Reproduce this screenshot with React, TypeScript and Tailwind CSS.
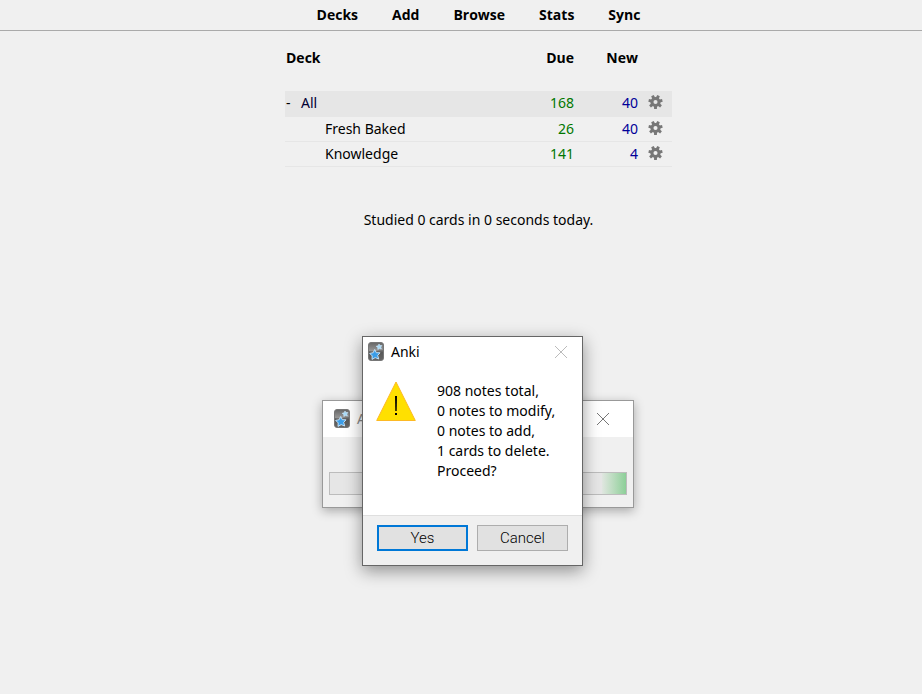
import React from "react";

const navItems = ["Decks", "Add", "Browse", "Stats", "Sync"];

const decks = [
  { name: "All", due: 168, fresh: 40, parent: true },
  { name: "Fresh Baked", due: 26, fresh: 40, parent: false },
  { name: "Knowledge", due: 141, fresh: 4, parent: false },
];

const summary = [
  "908 notes total,",
  "0 notes to modify,",
  "0 notes to add,",
  "1 cards to delete.",
  "Proceed?",
];

const teeth = [0, 1, 2, 3, 4, 5, 6];

function Gear() {
  return (
    <svg viewBox="-8 -8 16 16" className="block h-4 w-[15px]" aria-hidden="true">
      {teeth.map((i) => (
        <path
          key={i}
          d="M-1.7 3.5L-1.5 7.5H1.5L1.7 3.5Z"
          fill="#777"
          transform={`rotate(${(i * 360) / 7})`}
        />
      ))}
      <circle r="3.8" fill="none" stroke="#777" strokeWidth="3.2" />
    </svg>
  );
}

function AnkiLogo() {
  return (
    <svg viewBox="0 0 16 20" className="block h-5 w-4 shrink-0" aria-hidden="true">
      <defs>
        <linearGradient id="plate" x1="0" y1="0" x2="0" y2="1">
          <stop offset="0" stopColor="#666" />
          <stop offset="0.45" stopColor="#969696" />
          <stop offset="0.55" stopColor="#666" />
          <stop offset="1" stopColor="#808080" />
        </linearGradient>
      </defs>
      <rect x="0.5" y="0.5" width="15" height="18" rx="2.5" fill="url(#plate)" stroke="#777" />
      <path d="M1 9C5 11 10 8 15 8V16Q15 18 13 18H3Q1 18 1 16Z" fill="#4b4b4b" opacity="0.5" />
      <path
        d="M6.7 7.5L8.3 10.7L12 10.8L9.7 13.4L10.7 17L7.2 15.6L4 17.4L4.2 13.9L1.7 11.4L5.2 10.7Z"
        fill="#3b9de8"
        stroke="#cfeaff"
        strokeWidth="0.9"
        strokeLinejoin="round"
      />
      <path
        d="M11 2L11.9 3.6L13.9 3.5L12.8 5.1L13.4 7L11.4 6.4L9.8 7.5L9.8 5.5L8.2 4.3L10.2 3.8Z"
        fill="#a9dcf8"
        stroke="#cfeaff"
        strokeWidth="0.6"
        strokeLinejoin="round"
      />
    </svg>
  );
}

function CloseButton({ tone }: { tone: string }) {
  return (
    <button type="button" aria-label="Close" className={`ml-auto ${tone}`}>
      <svg viewBox="0 0 12 12" className="block size-3" fill="none" stroke="currentColor" aria-hidden="true">
        <path d="M0 0L12 12M12 0L0 12" />
      </svg>
    </button>
  );
}

function WarningSign() {
  return (
    <svg viewBox="0 0 40 40" className="block size-10 shrink-0" role="img" aria-label="Warning">
      <path d="M20 1L39.3 39.5H0.7Z" fill="#ffe000" stroke="#fdb924" />
      <path d="M19 15H21L20.7 30H19.3Z" fill="#000" />
      <rect x="19" y="32" width="2" height="2" fill="#000" />
    </svg>
  );
}

function ProgressWindow() {
  return (
    <section
      aria-label="Progress"
      className="absolute top-[400px] left-[322px] w-[312px] border border-[#999] bg-[#f0f0f0] shadow-[0_3px_10px_rgba(0,0,0,0.3)]"
    >
      <header className="flex h-9 items-center gap-[7px] bg-white pr-6 pl-[11px]">
        <AnkiLogo />
        <span className="text-[#888]">Anki</span>
        <CloseButton tone="text-[#777]" />
      </header>
      <div className="px-1.5 pt-[35px] pb-3">
        <div
          role="progressbar"
          aria-label="Syncing"
          className="flex h-[23px] justify-end border border-[#bcbcbc] bg-[#e6e6e6]"
        >
          <div className="w-6 bg-linear-to-r from-[#e0e6e0] to-[#8ccf98]" />
        </div>
      </div>
    </section>
  );
}

function ConfirmDialog() {
  return (
    <section
      role="dialog"
      aria-label="Anki"
      className="absolute top-[336px] left-[362px] w-[221px] border border-[#666] bg-white shadow-[0_5px_16px_rgba(0,0,0,0.4)]"
    >
      <header className="flex h-[30px] items-center gap-[7px] pr-[15px] pl-[5px]">
        <AnkiLogo />
        <span>Anki</span>
        <CloseButton tone="text-[#bbb]" />
      </header>
      <div className="flex h-[148px] gap-[21px] pt-3.5 pl-[13px]">
        <WarningSign />
        <div className="leading-5 whitespace-nowrap">
          {summary.map((line) => (
            <p key={line}>{line}</p>
          ))}
        </div>
      </div>
      <footer className="flex gap-[9px] border-t border-[#dfdfdf] bg-[#f0f0f0] px-3.5 pt-[9px] pb-3.5 font-['Roboto',sans-serif] text-[15px] font-light">
        <button type="button" className="h-[26px] w-1/2 border-2 border-[#0078d7] bg-[#e1e1e1]">
          Yes
        </button>
        <button type="button" className="h-[26px] w-1/2 border border-[#adadad] bg-[#e1e1e1]">
          Cancel
        </button>
      </footer>
    </section>
  );
}

export default function App() {
  return (
    <div className="relative min-h-screen bg-[#f0f0f0] font-['Noto_Sans','Open_Sans',sans-serif] text-[14px] leading-5 text-black">
      <nav className="flex h-[31px] items-center justify-center gap-[34px] border-b border-[#aaa] pl-[35px] font-['Open_Sans','Noto_Sans',sans-serif] font-bold">
        {navItems.map((item) => (
          <a key={item} href={`#${item.toLowerCase()}`}>
            {item}
          </a>
        ))}
      </nav>
      <main className="flex flex-col items-center pl-[35px]">
        <table className="mt-[15px] w-[387px] table-fixed border-collapse">
          <thead className="font-['Open_Sans','Noto_Sans',sans-serif]">
            <tr className="h-[45px] align-top">
              <th className="pt-0.5 pl-px text-left">Deck</th>
              <th className="w-16 pt-0.5 text-right">Due</th>
              <th className="w-16 pt-0.5 text-right">New</th>
              <th className="w-[34px]" aria-label="Options" />
            </tr>
          </thead>
          <tbody>
            {decks.map((deck) => (
              <tr
                key={deck.name}
                className={`h-[25px] border-b border-[#e6e6e6] ${deck.parent ? "bg-[#e6e6e6]" : ""}`}
              >
                <td className={deck.parent ? "pl-px" : "pl-10"}>
                  {deck.parent && (
                    <button type="button" className="w-[15px] text-left" aria-label="Collapse All">
                      -
                    </button>
                  )}
                  <a href="#deck" className={deck.parent ? "text-[#000033]" : ""}>
                    {deck.name}
                  </a>
                </td>
                <td className="text-right text-[#007700]">{deck.due}</td>
                <td className="text-right text-[#000099]">{deck.fresh}</td>
                <td className="pb-0.5 pl-2.5">
                  <button type="button" className="block" aria-label={`Options for ${deck.name}`}>
                    <Gear />
                  </button>
                </td>
              </tr>
            ))}
          </tbody>
        </table>
        <p className="mt-[43px]">Studied 0 cards in 0 seconds today.</p>
      </main>
      <ProgressWindow />
      <ConfirmDialog />
    </div>
  );
}
